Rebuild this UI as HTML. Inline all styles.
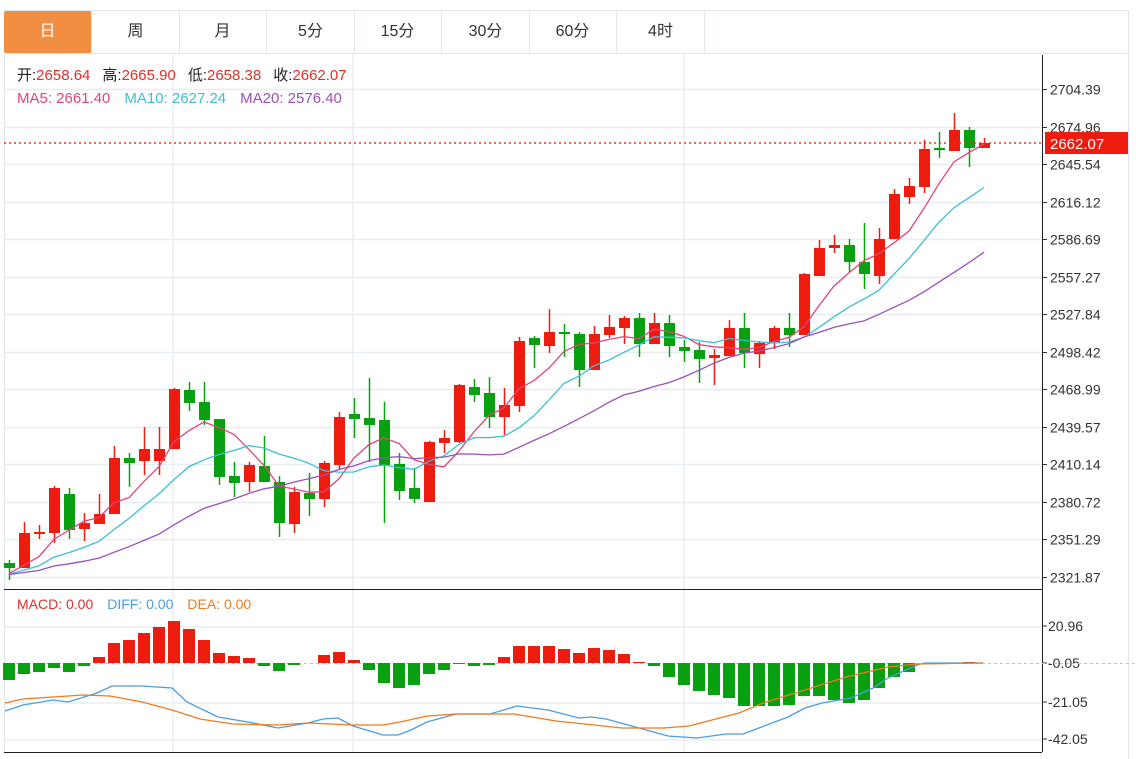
<!DOCTYPE html>
<html><head><meta charset="utf-8">
<style>
html,body{margin:0;padding:0;background:#fff;width:1136px;height:759px;overflow:hidden;font-family:"Liberation Sans","Noto Sans CJK SC",sans-serif;}
.tabs{position:absolute;left:4px;top:10px;height:43px;width:1124px;border-top:1px solid #dfe5ec;}
.tab{position:absolute;top:0;height:42px;width:87px;border-right:1px solid #dfe5ec;font-size:16px;color:#333;text-align:center;line-height:42px;}
.tab.on{background:#f28e42;color:#fff;border-radius:2px;}
svg{position:absolute;left:0;top:0;}
</style></head><body>
<div class="tabs">
<div class="tab on" style="left:0">日</div>
<div class="tab" style="left:88px">周</div>
<div class="tab" style="left:175px">月</div>
<div class="tab" style="left:263px">5分</div>
<div class="tab" style="left:350px">15分</div>
<div class="tab" style="left:438px">30分</div>
<div class="tab" style="left:525px">60分</div>
<div class="tab" style="left:613px">4时</div>
</div>
<svg id="s" width="1136" height="759" xmlns="http://www.w3.org/2000/svg" font-family="Liberation Sans, Noto Sans CJK SC, sans-serif"></svg>
<script>
var C=[[563,568,560,580,0],[533,568,522,568,1],[532,534,525,539,1],[488,533,486,543,1],[494,530,488,539,0],[523,529,513,541,1],[514,524,494,524,1],[458,514,446,514,1],[458,463,453,487,0],[449,461,427,475,1],[449,461,427,475,1],[389,449,388,449,1],[390,403,382,411,0],[402,420,382,425,0],[419,477,419,485,0],[476,483,462,497,0],[465,482,462,492,1],[466,482,436,482,0],[482,523,476,537,0],[492,524,487,533,1],[493,499,473,516,0],[463,499,461,507,1],[417,465,412,470,1],[414,419,398,438,0],[418,425,378,462,0],[420,465,402,523,0],[464,491,453,500,0],[488,499,468,503,0],[442,502,441,502,1],[438,443,430,453,1],[385,442,384,443,1],[387,395,379,402,0],[393,417,377,428,0],[405,417,388,435,1],[341,406,337,412,1],[338,345,336,368,0],[332,346,309,353,1],[332,334,324,357,0],[334,370,332,387,0],[334,370,326,370,1],[327,335,315,338,1],[318,328,316,344,1],[318,344,313,357,0],[323,344,313,344,1],[323,346,315,357,0],[347,351,340,362,0],[350,359,342,383,0],[355,358,349,385,1],[328,356,320,356,1],[328,353,313,368,0],[343,354,341,368,1],[328,342,326,349,1],[328,335,313,347,0],[274,335,273,335,1],[248,276,240,276,1],[245,248,235,253,1],[245,262,239,272,0],[262,274,223,289,0],[239,276,228,284,1],[194,239,189,239,1],[186,197,178,204,1],[149,187,140,193,1],[148,150,132,158,0],[130,151,113,151,1],[130,148,127,167,0],[143,148,138,148,1]];
var H=[-17,-11,-9,-5,-9,-3,6,20,23,30,36,42,34,23,10,7,5,-3,-8,-2,0,8,11,3,-7,-20,-25,-22,-11,-7,-1,-3,-2,6,17,17,17,14,10,15,13,9,1,-3,-14,-22,-28,-32,-35,-43,-43,-43,-42,-33,-33,-37,-40,-37,-25,-14,-9,0,0,0,1,0];
var BL=[[5,711],[23,705],[53,700],[68,702],[97,693],[112,686],[142,686],[172,688],[187,702],[218,717],[248,722],[278,728],[308,723],[323,719],[338,718],[353,726],[383,735],[398,735],[411,730],[427,722],[456,714],[490,714],[517,706],[548,710],[579,718],[591,717],[606,719],[639,728],[668,736],[697,738],[726,734],[743,734],[788,717],[805,708],[822,703],[851,698],[873,688],[888,678],[917,665],[925,663],[983,663]];
var OR=[[5,703],[23,699],[53,697],[83,695],[110,696],[142,702],[172,710],[200,719],[233,724],[278,725],[308,723],[353,725],[383,725],[400,722],[427,716],[456,714],[514,714],[556,721],[622,728],[664,728],[689,726],[739,713],[763,703],[805,690],[846,677],[888,667],[917,664],[983,663]];
var s='';
var gl='#e6edf3';
var prices=['2704.39','2674.96','2645.54','2616.12','2586.69','2557.27','2527.84','2498.42','2468.99','2439.57','2410.14','2380.72','2351.29','2321.87'];
for(var i=0;i<14;i++){var y=Math.round(89+i*37.5)+0.5;s+='<line x1="4" y1="'+y+'" x2="1042" y2="'+y+'" stroke="'+gl+'" stroke-width="1.5"/>';s+='<line x1="1042" y1="'+y+'" x2="1047" y2="'+y+'" stroke="#333"/>';s+='<text x="1050" y="'+(y+5)+'" font-size="14" fill="#333">'+prices[i]+'</text>';}
[173,353,684].forEach(function(x){s+='<line x1="'+x+'" y1="53" x2="'+x+'" y2="752" stroke="'+gl+'" stroke-width="1.5"/>';});
[627,703,740].forEach(function(y){s+='<line x1="4" y1="'+y+'" x2="1042" y2="'+y+'" stroke="'+gl+'" stroke-width="1.5"/>';});
var ml=[[626,'20.96'],[663,'-0.05'],[702,'-21.05'],[739,'-42.05']];
ml.forEach(function(m){s+='<line x1="1042" y1="'+m[0]+'" x2="1047" y2="'+m[0]+'" stroke="#333"/><text x="1048" y="'+(m[0]+5)+'" font-size="14" fill="#333">'+m[1]+'</text>';});
s+='<line x1="4.5" y1="53" x2="4.5" y2="752" stroke="#dfe5ec"/><line x1="1128.5" y1="10" x2="1128.5" y2="759" stroke="#dfe5ec"/><line x1="4" y1="53.5" x2="1128" y2="53.5" stroke="#dfe5ec"/>';
s+='<line x1="4" y1="589.5" x2="1042" y2="589.5" stroke="#222"/><line x1="4" y1="752.5" x2="1042" y2="752.5" stroke="#222"/><line x1="1042.5" y1="55" x2="1042.5" y2="752" stroke="#222"/>';
for(var i=0;i<C.length;i++){var c=C[i],x=9+i*15,col=c[4]?'#ee1c0e':'#08a010';
s+='<line x1="'+(x+0.5)+'" y1="'+c[2]+'" x2="'+(x+0.5)+'" y2="'+c[3]+'" stroke="'+col+'" stroke-width="1.5"/>';
var h=Math.max(c[1]-c[0],2);s+='<rect x="'+(x-5)+'" y="'+c[0]+'" width="11" height="'+h+'" fill="'+col+'"/>';}
var cl=[];for(var k=0;k<19;k++)cl.push(575);C.forEach(function(c){cl.push(c[4]?c[0]:c[1]);});
function ma(n,col){var p='';for(var i=0;i<C.length;i++){var j=i+19,t=0;for(var k=0;k<n;k++)t+=cl[j-k];p+=(i?'L':'M')+(9+i*15)+' '+(t/n).toFixed(1);}s+='<path d="'+p+'" fill="none" stroke="'+col+'" stroke-width="1.3"/>';}
ma(5,'#e0457b');ma(10,'#3cc0d4');ma(20,'#9c4fb9');
s+='<line x1="4" y1="143" x2="1042" y2="143" stroke="#f03020" stroke-width="1.5" stroke-dasharray="2,3"/>';
s+='<rect x="1045" y="132" width="83" height="22" fill="#ee1c0e"/><text x="1050" y="149" font-size="15" fill="#fff">2662.07</text>';
s+='<line x1="4" y1="663.5" x2="1136" y2="663.5" stroke="#a8c8e0" stroke-dasharray="3,3"/>';
for(var i=0;i<H.length;i++){var v=H[i];if(!v)continue;var x=9+i*15;s+='<rect x="'+(x-6)+'" y="'+(v>0?663-v:663)+'" width="12" height="'+Math.abs(v)+'" fill="'+(v>0?'#ee1c0e':'#08a010')+'"/>';}
function pl(a,col){s+='<polyline points="'+a.map(function(p){return p.join(',')}).join(' ')+'" fill="none" stroke="'+col+'" stroke-width="1.3"/>';}
pl(BL,'#4a9de0');pl(OR,'#ee7a22');
s+='<text x="17" y="80" font-size="15"><tspan fill="#222">开:</tspan><tspan fill="#e0302a">2658.64</tspan><tspan fill="#222" dx="12">高:</tspan><tspan fill="#e0302a">2665.90</tspan><tspan fill="#222" dx="12">低:</tspan><tspan fill="#e0302a">2658.38</tspan><tspan fill="#222" dx="12">收:</tspan><tspan fill="#e0302a">2662.07</tspan></text>';
s+='<text x="17" y="103" font-size="15"><tspan fill="#e0457b">MA5: 2661.40</tspan><tspan fill="#3cc0d4" dx="14">MA10: 2627.24</tspan><tspan fill="#9c4fb9" dx="14">MA20: 2576.40</tspan></text>';
s+='<text x="17" y="609" font-size="14"><tspan fill="#e0302a">MACD: 0.00</tspan><tspan fill="#4a9de0" dx="14">DIFF: 0.00</tspan><tspan fill="#ee7a22" dx="14">DEA: 0.00</tspan></text>';
document.getElementById('s').innerHTML=s;
</script>
</body></html>
